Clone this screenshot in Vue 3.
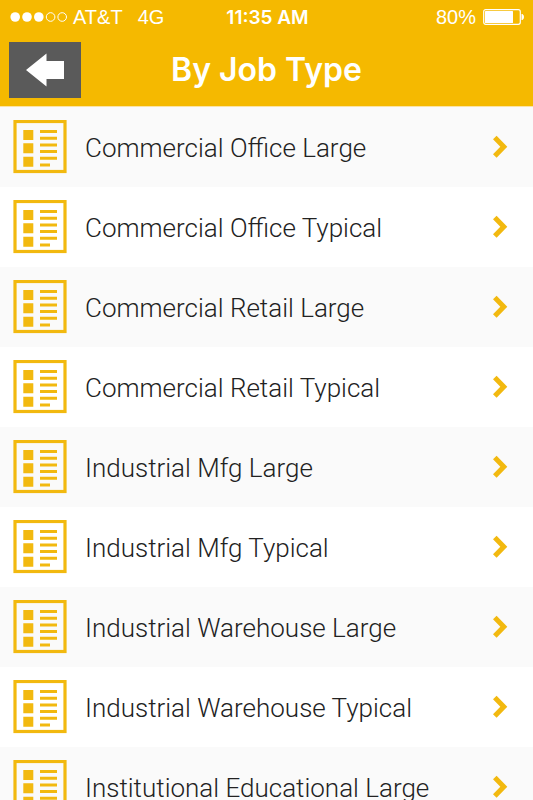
<template>
  <div class="page">
    <header class="top">
      <div class="status">
        <div class="carrier">
          <svg class="signal" viewBox="0 0 58 12" aria-hidden="true">
            <circle cx="5.2" cy="6" r="4.8" fill="#fff" />
            <circle cx="17" cy="6" r="4.8" fill="#fff" />
            <circle cx="28.8" cy="6" r="4.8" fill="#fff" />
            <circle cx="40.6" cy="6" r="4.3" fill="none" stroke="#fff" />
            <circle cx="52.2" cy="6" r="4.3" fill="none" stroke="#fff" />
          </svg>
          <span>AT&amp;T</span>
          <span class="network">4G</span>
        </div>
        <div class="time">11:35 AM</div>
        <div class="power">
          <span>80%</span>
          <svg class="battery" viewBox="0 0 42 16" aria-hidden="true">
            <rect x="0.7" y="0.7" width="36.6" height="14.6" rx="2" fill="none" stroke="#fff" stroke-width="1.2" />
            <rect x="2" y="2" width="28" height="12" rx="0.5" fill="#fff" />
            <path d="M38.5 5H39.5Q41 6 41 8Q41 10 39.5 11H38.5Z" fill="#fff" />
          </svg>
        </div>
      </div>

      <div class="nav">
        <button class="back" type="button" aria-label="Back">
          <svg viewBox="0 0 40 34" aria-hidden="true">
            <path d="M1 17L21.5 0.5V8H39V26H21.5V33.5Z" fill="#fff" />
          </svg>
        </button>
        <h1 class="title">By Job Type</h1>
      </div>
    </header>

    <ul class="list">
      <li v-for="name in jobTypes" :key="name">
        <a class="row" href="#">
          <svg class="icon" viewBox="0 0 54 54" aria-hidden="true">
            <rect x="2" y="1.5" width="50" height="50" fill="none" stroke="#f2b90f" stroke-width="3.2" />
            <path
              d="M10.3 10H20.3V20H10.3ZM10.3 23.3H20.3V33.3H10.3ZM10.3 36.7H20.3V46.7H10.3Z
                 M27 10H44V13H27ZM27 16.7H44V19.7H27ZM27 23.4H44V26.4H27ZM27 30H44V33H27Z
                 M27 36.8H44V39.8H27ZM27 43.4H37V46.4H27Z"
              fill="#f2b90f"
            />
          </svg>
          <span class="name">{{ name }}</span>
          <svg class="chevron" viewBox="0 0 16 24" aria-hidden="true">
            <path d="M1.8 2.5L10.8 11.7L1.8 21" fill="none" stroke="#f2b90f" stroke-width="5" />
          </svg>
        </a>
      </li>
    </ul>
  </div>
</template>

<script setup>
const jobTypes = [
  'Commercial Office Large',
  'Commercial Office Typical',
  'Commercial Retail Large',
  'Commercial Retail Typical',
  'Industrial Mfg Large',
  'Industrial Mfg Typical',
  'Industrial Warehouse Large',
  'Industrial Warehouse Typical',
  'Institutional Educational Large'
]
</script>

<style>
body {
  margin: 0;
}
</style>

<style scoped>
.page {
  display: flex;
  flex-direction: column;
  height: 100vh;
  overflow: hidden;
  background: #fff;
  font-family: Inter, "Liberation Sans", sans-serif;
}

/* header */
.top {
  flex: none;
  background: #f5b900;
  border-bottom: 1px solid #fbe3a4;
  color: #fff;
}
.status {
  display: grid;
  grid-template-columns: 1fr auto 1fr;
  align-items: center;
  height: 34px;
  padding: 0 8px 0 10px;
  font-family: "Liberation Sans", sans-serif;
  font-size: 20px;
}
.carrier,
.power {
  display: flex;
  align-items: center;
}
.power {
  justify-content: flex-end;
  gap: 7px;
}
.signal {
  width: 58px;
  height: 12px;
  margin-right: 5px;
}
.network {
  margin-left: 15px;
}
.time {
  font-family: Inter, sans-serif;
  font-size: 19px;
  font-weight: 600;
}
.battery {
  width: 42px;
  height: 16px;
}
.nav {
  display: grid;
  grid-template-columns: 72px 1fr 72px;
  align-items: center;
  padding: 8px 9px;
}
.back {
  display: grid;
  place-items: center;
  height: 56px;
  padding: 0;
  border: 0;
  background: #5a5a5a;
  cursor: pointer;
}
.back svg {
  width: 40px;
  height: 34px;
}
.title {
  margin: 0;
  font-size: 32px;
  font-weight: 600;
  line-height: 40px;
  text-align: center;
}

/* list */
.list {
  flex: 1;
  min-height: 0;
  margin: 0;
  padding: 0;
  list-style: none;
  overflow-y: auto;
  scrollbar-width: none;
}
.row {
  display: flex;
  align-items: center;
  height: 80px;
  padding: 0 24px 0 13px;
  color: #222;
  text-decoration: none;
}
.list li:nth-child(odd) {
  background: #fafafa;
}
.icon {
  flex: none;
  width: 54px;
  height: 54px;
}
.name {
  flex: 1;
  margin-left: 18px;
  padding-top: 2px;
  font-family: Roboto, "Liberation Sans", sans-serif;
  font-size: 26px;
  font-weight: 300;
  white-space: nowrap;
}
.chevron {
  flex: none;
  width: 16px;
  height: 24px;
}
</style>
